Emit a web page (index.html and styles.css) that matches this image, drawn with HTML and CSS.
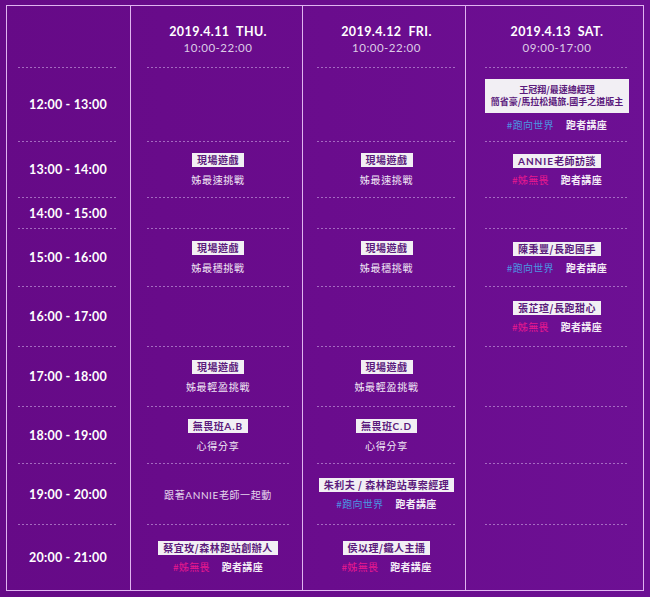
FILE: index.html
```html
<!DOCTYPE html>
<html lang="zh-Hant">
<head>
<meta charset="utf-8">
<title>Schedule</title>
<link rel="stylesheet" href="styles.css">
</head>
<body>
<div class="page">
  <div class="schedule">
    <div class="col col-time">
      <div class="slot head"></div>
      <div class="slot"><span class="time">12:00 - 13:00</span></div>
      <div class="slot"><span class="time">13:00 - 14:00</span></div>
      <div class="slot"><span class="time">14:00 - 15:00</span></div>
      <div class="slot"><span class="time">15:00 - 16:00</span></div>
      <div class="slot"><span class="time">16:00 - 17:00</span></div>
      <div class="slot"><span class="time">17:00 - 18:00</span></div>
      <div class="slot"><span class="time">18:00 - 19:00</span></div>
      <div class="slot"><span class="time">19:00 - 20:00</span></div>
      <div class="slot last"><span class="time">20:00 - 21:00</span></div>
    </div>

    <div class="col col-d1">
      <div class="slot head"><div class="date">2019.4.11&nbsp;&nbsp;THU.</div><div class="hours">10:00-22:00</div></div>
      <div class="slot"></div>
      <div class="slot"><span class="box">現場遊戲</span><span class="sub">姊最速挑戰</span></div>
      <div class="slot"></div>
      <div class="slot"><span class="box">現場遊戲</span><span class="sub">姊最穩挑戰</span></div>
      <div class="slot"></div>
      <div class="slot"><span class="box">現場遊戲</span><span class="sub">姊最輕盈挑戰</span></div>
      <div class="slot"><span class="box">無畏班<b class="lat">A.B</b></span><span class="sub">心得分享</span></div>
      <div class="slot"><span class="plain">跟著<span class="lat">ANNIE</span>老師一起動</span></div>
      <div class="slot last"><span class="box">蔡宜玫/森林跑站創辦人</span><span class="tags"><span class="tag pink">#姊無畏</span><span class="tag">跑者講座</span></span></div>
    </div>

    <div class="col col-d2">
      <div class="slot head"><div class="date">2019.4.12&nbsp;&nbsp;FRI.</div><div class="hours">10:00-22:00</div></div>
      <div class="slot"></div>
      <div class="slot"><span class="box">現場遊戲</span><span class="sub">姊最速挑戰</span></div>
      <div class="slot"></div>
      <div class="slot"><span class="box">現場遊戲</span><span class="sub">姊最穩挑戰</span></div>
      <div class="slot"></div>
      <div class="slot"><span class="box">現場遊戲</span><span class="sub">姊最輕盈挑戰</span></div>
      <div class="slot"><span class="box">無畏班<b class="lat">C.D</b></span><span class="sub">心得分享</span></div>
      <div class="slot"><span class="box">朱利夫 / 森林跑站專案經理</span><span class="tags"><span class="tag blue">#跑向世界</span><span class="tag">跑者講座</span></span></div>
      <div class="slot last"><span class="box">侯以理/鐵人主播</span><span class="tags"><span class="tag pink">#姊無畏</span><span class="tag">跑者講座</span></span></div>
    </div>

    <div class="col col-d3">
      <div class="slot head"><div class="date">2019.4.13&nbsp;&nbsp;SAT.</div><div class="hours">09:00-17:00</div></div>
      <div class="slot"><span class="box wide">王冠翔/最速總經理<br>簡省豪/馬拉松攝旅.國手之道版主</span><span class="tags"><span class="tag blue">#跑向世界</span><span class="tag">跑者講座</span></span></div>
      <div class="slot"><span class="box"><b class="lat">ANNIE</b>老師訪談</span><span class="tags"><span class="tag pink">#姊無畏</span><span class="tag">跑者講座</span></span></div>
      <div class="slot"></div>
      <div class="slot"><span class="box">陳秉豐/長跑國手</span><span class="tags"><span class="tag blue">#跑向世界</span><span class="tag">跑者講座</span></span></div>
      <div class="slot"><span class="box">張芷瑄/長跑甜心</span><span class="tags"><span class="tag pink">#姊無畏</span><span class="tag">跑者講座</span></span></div>
      <div class="slot"></div>
      <div class="slot"></div>
      <div class="slot"></div>
      <div class="slot last"></div>
    </div>
  </div>
</div>
</body>
</html>
```

FILE: styles.css
```css
* { box-sizing: border-box; }

html, body {
  margin: 0;
  padding: 0;
  height: 100%;
}

body {
  background-color: #690b8b;
  background-image: linear-gradient(90deg, #660a87 0%, #6a0c8d 50%, #6d1094 100%);
  font-family: "Noto Sans CJK TC", "Noto Sans", sans-serif;
  color: #fff;
}

.page {
  padding: 5px 0 0 6px;
}

.schedule {
  display: flex;
  border-top: 1px solid #e0b4f0;
  border-bottom: 1px solid #e0b4f0;
  border-right: 1px solid #e0b4f0;
  width: 638px;
}

.col {
  display: grid;
  grid-template-rows: 62px 74px 56px 31px 58px 60px 60px 57px 61px 65px;
  border-left: 1px solid #e0b4f0;
}

.col-time { width: 124px; }
.col-d1 { width: 172px; }
.col-d2 { width: 163px; }
.col-d3 { width: 178px; }

.slot {
  display: flex;
  flex-direction: column;
  align-items: center;
  justify-content: center;
  background: repeating-linear-gradient(90deg, rgba(190, 145, 215, 0.7) 0 2px, transparent 2px 4px) left bottom / 100% 1px no-repeat;
  padding-bottom: 1px;
}

.slot.last { background: none; }

.col-time .slot { margin: 0 12px 0 11px; }
.col-d1 .slot { margin: 0 13px 0 16px; }
.col-d2 .slot { margin: 0 9px 0 14px; }
.col-d3 .slot { margin: 0 17px 0 19px; }

.slot.head {
  justify-content: flex-start;
  padding-top: 18px;
}

.time {
  font-family: "Lato", "Noto Sans", sans-serif;
  font-weight: 700;
  font-size: 12.5px;
  letter-spacing: 0.2px;
  color: #fff;
}

.date {
  font-family: "Lato", "Noto Sans", sans-serif;
  font-weight: 700;
  font-size: 12.5px;
  letter-spacing: 0.4px;
  line-height: 16px;
  color: #fff;
}

.hours {
  font-family: "Lato", "Noto Sans", sans-serif;
  font-weight: 400;
  font-size: 11.5px;
  letter-spacing: 0.5px;
  line-height: 15px;
  color: #dccbe6;
}

.box {
  background: #f2eff4;
  color: #5b1a7c;
  font-weight: 700;
  font-size: 10px;
  letter-spacing: 0.5px;
  line-height: 14px;
  padding: 0 5px;
  text-align: center;
  white-space: nowrap;
}

.box.wide {
  font-size: 9px;
  line-height: 12px;
  padding: 5px 0;
  width: 144px;
  letter-spacing: 0;
}

.lat {
  font-family: "Lato", "Noto Sans", sans-serif;
  font-weight: 700;
  letter-spacing: 1px;
}

.sub {
  margin-top: 6px;
  font-size: 10px;
  letter-spacing: 0.7px;
  line-height: 13px;
  color: #f1e8f5;
}

.plain {
  font-size: 10px;
  letter-spacing: 0.6px;
  color: #e4d6ec;
}

.plain .lat {
  font-weight: 400;
  letter-spacing: 0.6px;
}

.tags {
  display: flex;
  gap: 12px;
  margin-top: 5px;
  line-height: 13px;
}

.tag {
  font-size: 10px;
  font-weight: 700;
  letter-spacing: 0.3px;
  color: #f3ecf6;
}

.tag.blue { color: #4b95e2; font-weight: 400; }
.tag.pink { color: #e8198e; font-weight: 400; }
```
